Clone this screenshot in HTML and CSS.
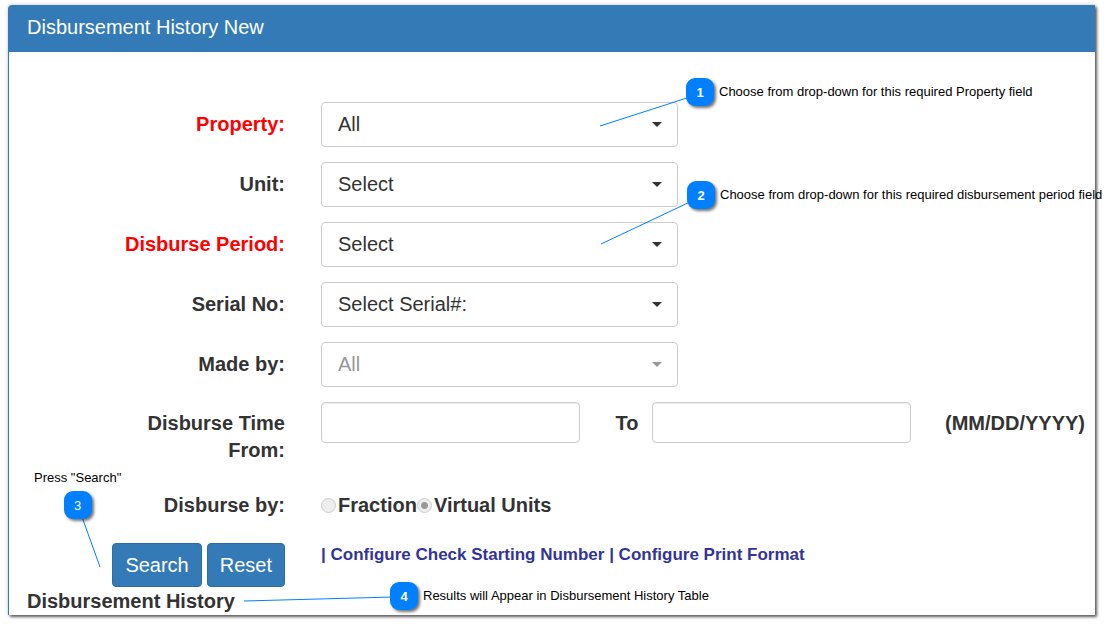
FILE: index.html
```html
<!DOCTYPE html>
<html lang="en">
<head>
<meta charset="utf-8">
<title>Disbursement History New</title>
<link rel="stylesheet" href="styles.css">
</head>
<body>
<main class="panel">
  <h1 class="panel-header">Disbursement History New</h1>
  <form class="form">
    <div class="row">
      <label class="label required" for="property">Property:</label>
      <div class="select-box">
        <select class="select" id="property"><option>All</option></select>
        <svg class="caret" viewBox="0 0 10 5"><path d="M0 0h10L5 5z"/></svg>
      </div>
    </div>
    <div class="row">
      <label class="label" for="unit">Unit:</label>
      <div class="select-box">
        <select class="select" id="unit"><option>Select</option></select>
        <svg class="caret" viewBox="0 0 10 5"><path d="M0 0h10L5 5z"/></svg>
      </div>
    </div>
    <div class="row">
      <label class="label required" for="period">Disburse Period:</label>
      <div class="select-box">
        <select class="select" id="period"><option>Select</option></select>
        <svg class="caret" viewBox="0 0 10 5"><path d="M0 0h10L5 5z"/></svg>
      </div>
    </div>
    <div class="row">
      <label class="label" for="serial">Serial No:</label>
      <div class="select-box">
        <select class="select" id="serial"><option>Select Serial#:</option></select>
        <svg class="caret" viewBox="0 0 10 5"><path d="M0 0h10L5 5z"/></svg>
      </div>
    </div>
    <div class="row">
      <label class="label" for="made-by">Made by:</label>
      <div class="select-box">
        <select class="select" id="made-by" disabled><option>All</option></select>
        <svg class="caret muted" viewBox="0 0 10 5"><path d="M0 0h10L5 5z"/></svg>
      </div>
    </div>
    <div class="row wide-row time-row">
      <label class="label" for="from">Disburse Time<br>From:</label>
      <div class="range">
        <input class="input" id="from" type="text">
        <label class="to" for="to">To</label>
        <input class="input" id="to" type="text">
        <span class="hint">(MM/DD/YYYY)</span>
      </div>
    </div>
    <div class="row wide-row by-row" role="radiogroup" aria-labelledby="by">
      <span class="label" id="by">Disburse by:</span>
      <div class="radios">
        <label class="radio-label"><input class="radio" type="radio" name="by" disabled>Fraction</label>
        <label class="radio-label"><input class="radio" type="radio" name="by" checked disabled>Virtual Units</label>
      </div>
    </div>
    <div class="row wide-row action-row">
      <div class="buttons">
        <button class="button" type="button">Search</button>
        <button class="button" type="button">Reset</button>
      </div>
      <div class="links">| <a class="link" href="#check">Configure Check Starting Number</a> | <a class="link" href="#print">Configure Print Format</a></div>
    </div>
  </form>
  <h2 class="history">Disbursement History</h2>
</main>

<div class="notes">
  <svg class="leaders" width="1113" height="624">
    <path d="M600 126L690 97M601 244L692 201M100 567L82 517M244 601L394 597"/>
  </svg>
  <div class="note note-1"><span class="badge">1</span><span>Choose from drop-down for this required Property field</span></div>
  <div class="note note-2"><span class="badge">2</span><span>Choose from drop-down for this required disbursement period field</span></div>
  <div class="note note-3"><span>Press "Search"</span><span class="badge badge-light">3</span></div>
  <div class="note note-4"><span class="badge">4</span><span>Results will Appear in Disbursement History Table</span></div>
</div>
</body>
</html>
```
FILE: styles.css
```css
* {
  box-sizing: border-box;
}

body {
  margin: 0;
  padding: 5px 18px 9px 8px;
  background: #fff;
  color: #333;
  font-family: "Liberation Sans", Arial, sans-serif;
  font-size: 20px;
  line-height: 27px;
}

.panel {
  border-left: 1px solid #337ab7;
  border-top-left-radius: 4px;
  box-shadow: 2px 2px 3px rgba(0, 0, 0, 0.6), 0 0 4px rgba(0, 0, 0, 0.2);
}

.panel-header {
  margin: 0;
  padding: 9px 18px 11px;
  border-top-left-radius: 3px;
  background: #337ab7;
  color: #fff;
  font-size: 20px;
  font-weight: 400;
}

.form {
  display: flex;
  flex-direction: column;
  gap: 15px;
  padding-top: 50px;
}

.row {
  display: grid;
  grid-template-columns: 276fr 357fr 381fr;
  column-gap: 36px;
  align-items: center;
}

.wide-row {
  grid-template-columns: 276fr 774fr;
}

.label {
  font-weight: 700;
  text-align: right;
}

.required {
  color: #f00;
}

.select-box {
  display: grid;
  align-items: center;
}

.select,
.input {
  width: 100%;
  border: 1px solid #ccc;
  border-radius: 4px;
  background: #fff;
  color: #333;
  font: inherit;
}

.select {
  grid-area: 1 / 1;
  height: 45px;
  padding: 0 32px 0 16px;
  appearance: none;
}

.select:disabled {
  color: #999;
  opacity: 1;
}

.caret {
  grid-area: 1 / 1;
  justify-self: end;
  width: 10px;
  height: 5px;
  margin-right: 16px;
  fill: #333;
  pointer-events: none;
}

.muted {
  fill: #999;
}

.time-row {
  align-items: start;
}

.time-row .label,
.to,
.hint {
  padding-top: 8px;
  font-weight: 700;
}

.range {
  display: flex;
  align-items: flex-start;
  padding-right: 10px;
}

.input {
  flex: 1;
  min-width: 0;
  height: 41px;
  padding: 0 16px;
  box-shadow: inset 0 1px 1px rgba(0, 0, 0, 0.08);
}

.to {
  padding-right: 14px;
  padding-left: 36px;
}

.hint {
  padding-left: 34px;
}

.by-row {
  margin-top: 13px;
}

.radios {
  display: flex;
  font-weight: 700;
}

.radio-label {
  display: flex;
  align-items: center;
  gap: 2px;
}

.radio {
  width: 15px;
  height: 15px;
  margin: 0;
  border: 1px solid #ccc;
  border-radius: 50%;
  background: #eee;
  appearance: none;
}

.radio:checked {
  background: radial-gradient(circle, #999 0 3px, #eee 4px);
}

.action-row {
  align-items: start;
  margin-top: 9px;
}

.buttons {
  display: flex;
  justify-content: flex-end;
  gap: 5px;
}

.button {
  height: 44px;
  padding: 0 12px;
  border: 1px solid #2e6da4;
  border-radius: 4px;
  background: #337ab7;
  color: #fff;
  font: inherit;
}

.links {
  color: #339;
  font-size: 17px;
  font-weight: 700;
  line-height: 24px;
}

.link {
  color: inherit;
  text-decoration: none;
}

.history {
  margin: 0;
  padding-left: 18px;
  font-size: 20px;
  line-height: 28px;
}

/* Numbered callouts laid over the form */
.notes {
  position: absolute;
  top: 0;
  left: 0;
  color: #000;
  font-size: 13px;
  line-height: 18px;
  white-space: nowrap;
  pointer-events: none;
}

.leaders {
  display: block;
  fill: none;
  stroke: #0080ff;
  stroke-width: 1;
}

.note {
  position: absolute;
  display: flex;
  align-items: center;
  gap: 5px;
}

.note-1 {
  top: 78px;
  left: 686px;
}

.note-2 {
  top: 181px;
  left: 687px;
}

.note-3 {
  top: 469px;
  left: 34px;
  flex-direction: column;
  gap: 4px;
}

.note-4 {
  top: 582px;
  left: 390px;
}

.badge {
  width: 28px;
  height: 28px;
  border-radius: 9px;
  background: #0080ff;
  box-shadow: 2px 2px 3px rgba(0, 0, 0, 0.55);
  color: #fff;
  font-weight: 700;
  line-height: 29px;
  text-align: center;
}

.badge-light {
  font-weight: 400;
}
```
